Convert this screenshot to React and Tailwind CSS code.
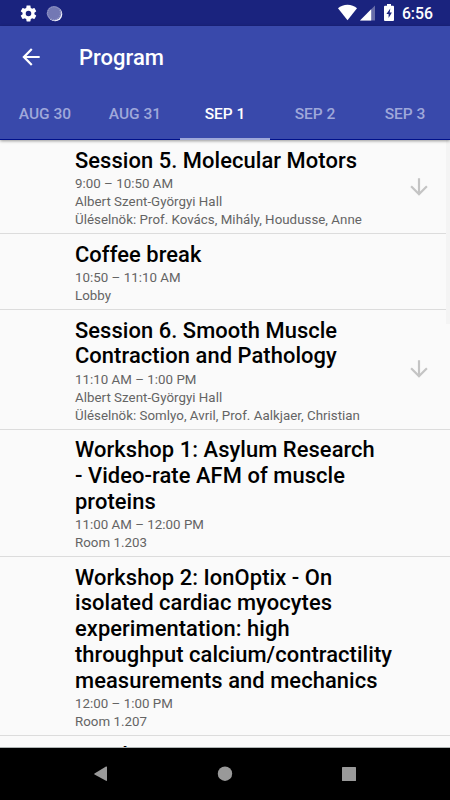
import React from "react";

const tabs = ["AUG 30", "AUG 31", "SEP 1", "SEP 2", "SEP 3"];

const sessions = [
  {
    title: ["Session 5. Molecular Motors"],
    details: ["9:00 – 10:50 AM", "Albert Szent-Györgyi Hall", "Üléselnök: Prof. Kovács, Mihály, Houdusse, Anne"],
    expandable: true,
    height: "h-[94px]",
  },
  { title: ["Coffee break"], details: ["10:50 – 11:10 AM", "Lobby"], height: "h-[76px]" },
  {
    title: ["Session 6. Smooth Muscle", "Contraction and Pathology"],
    details: ["11:10 AM – 1:00 PM", "Albert Szent-Györgyi Hall", "Üléselnök: Somlyo, Avril, Prof. Aalkjaer, Christian"],
    expandable: true,
    height: "h-[119.5px]",
  },
  {
    title: ["Workshop 1: Asylum Research", "- Video-rate AFM of muscle", "proteins"],
    details: ["11:00 AM – 12:00 PM", "Room 1.203"],
    height: "h-[127.5px]",
  },
  {
    title: [
      "Workshop 2: IonOptix - On",
      "isolated cardiac myocytes",
      "experimentation: high",
      "throughput calcium/contractility",
      "measurements and mechanics",
    ],
    details: ["12:00 – 1:00 PM", "Room 1.207"],
    height: "h-[178.5px]",
  },
  { title: ["Lunch"], details: [], height: "h-[76px]" },
];

function StatusBar() {
  return (
    <div className="flex h-[26px] shrink-0 items-center bg-[#1a237e] pl-[19px] pr-[17px] text-white">
      <svg className="size-[19px]" viewBox="0 0 24 24" fill="currentColor">
        <path d="M19.43 12.98c.04-.32.07-.64.07-.98s-.03-.66-.07-.98l2.11-1.65c.19-.15.24-.42.12-.64l-2-3.46c-.12-.22-.39-.3-.61-.22l-2.49 1c-.52-.4-1.08-.73-1.69-.98l-.38-2.65C14.46 2.18 14.25 2 14 2h-4c-.25 0-.46.18-.49.42l-.38 2.65c-.61.25-1.17.59-1.69.98l-2.49-1c-.23-.09-.49 0-.61.22l-2 3.46c-.13.22-.07.49.12.64l2.11 1.65c-.04.32-.07.65-.07.98s.03.66.07.98l-2.11 1.65c-.19.15-.24.42-.12.64l2 3.46c.12.22.39.3.61.22l2.49-1c.52.4 1.08.73 1.69.98l.38 2.65c.03.24.24.42.49.42h4c.25 0 .46-.18.49-.42l.38-2.65c.61-.25 1.17-.59 1.69-.98l2.49 1c.23.09.49 0 .61-.22l2-3.46c.12-.22.07-.49-.12-.64l-2.11-1.65zM12 15.5A3.5 3.5 0 1 1 12 8.5a3.5 3.5 0 0 1 0 7z" />
      </svg>
      <svg className="ml-2 size-[17px]" viewBox="0 0 17 17">
        <circle cx="9.1" cy="9.1" r="7.2" fill="#f2f3fb" />
        <circle cx="8" cy="8.2" r="7.3" fill="#7378b4" />
        <circle cx="8" cy="8.2" r="6.4" fill="none" stroke="#a3a6d0" strokeWidth="1" strokeDasharray="1 1" />
      </svg>
      <div className="ml-auto flex items-center">
        <svg className="h-[17px] w-[19px]" viewBox="0 0 19 17" fill="currentColor">
          <path d="M9.5 16.3 0 4.3C2.5 2 5.8.8 9.5.8S16.500 2 19 4.300Z" />
        </svg>
        <svg className="ml-[2.5px] h-[16px] w-[15px]" viewBox="0 0 15 16">
          <path d="M0 15.500 15 .5v15Z" fill="#686da9" />
          <path d="M0 15.500 11.200 4.300v11.200Z" fill="white" />
        </svg>
        <svg className="ml-[9px] h-[17px] w-[10px]" viewBox="0 0 10 17">
          <path d="M3 0h4v1.700h2a1 1 0 0 1 1 1V16a1 1 0 0 1-1 1H1a1 1 0 0 1-1-1V2.700a1 1 0 0 1 1-1h2Z" fill="white" />
          <path d="M6.300 4.500 2.400 10h2.200v4l3.300-5.500H5.700Z" fill="#1a237e" />
        </svg>
        <span className="ml-[8px] pt-[2px] text-[15.8px] leading-none font-medium">6:56</span>
      </div>
    </div>
  );
}

function AppBar() {
  return (
    <header className="relative z-10 flex h-[114px] shrink-0 flex-col border-b border-[#00108a] bg-[#3949ab] shadow-[0_1px_3px_rgba(0,0,0,0.4)]">
      <div className="flex h-[63px] items-center pl-[18px] text-white">
        <svg className="-mt-[2px] size-[26px]" viewBox="0 0 24 24" fill="currentColor">
          <path d="M20 11H7.830l5.590-5.590L12 4l-8 8 8 8 1.410-1.410L7.830 13H20v-2z" />
        </svg>
        <h1 className="ml-[35px] pt-[1px] text-[22px] leading-none font-medium">Program</h1>
      </div>
      <nav className="grid flex-1 grid-cols-5">
        {tabs.map((tab) => (
          <button
            key={tab}
            className={
              tab === "SEP 1"
                ? "-mb-px border-b-2 border-[#9fa8da] pt-[3px] text-[15.5px] font-medium text-white"
                : "-mb-px border-b-2 border-transparent pt-[3px] text-[15.5px] font-medium text-[#9fa8da]"
            }
          >
            {tab}
          </button>
        ))}
      </nav>
    </header>
  );
}

function Session({ session }) {
  return (
    <article className={`flex shrink-0 items-center border-b border-[#dcdcdc] pl-[75px] ${session.height}`}>
      <div className="flex-1 self-stretch pt-[7.5px]">
        <h2 className="text-[21.9px] leading-[25.75px] font-medium tracking-[0.07px] whitespace-nowrap text-black">
          {session.title.map((line) => (
            <span key={line} className="block">{line}</span>
          ))}
        </h2>
        <div className="pt-[2px] text-[13.3px] leading-[18px] tracking-[0.03px] whitespace-nowrap text-[#646464]">
          {session.details.map((line) => (
            <p key={line}>{line}</p>
          ))}
        </div>
      </div>
      {session.expandable && (
        <svg className="mr-[18px] size-[26px] shrink-0" viewBox="0 0 24 24" fill="#c4c4c4">
          <path d="M20 12l-1.410-1.410L13 16.170V4h-2v12.170l-5.580-5.590L4 12l8 8 8-8z" />
        </svg>
      )}
    </article>
  );
}

function NavigationBar() {
  return (
    <footer className="flex h-[53px] shrink-0 items-center border-t border-[#aeb4b4] bg-black text-[#999999]">
      <svg className="h-[52px] w-full" viewBox="0 0 450 52" fill="currentColor">
        <path d="M94.500 25.600 106 18.500q1-.4 1 .5v13.300q0 .9-1 .500L94.500 26.600q-.8-.5 0-1z" />
        <circle cx="225" cy="25.700" r="7.200" />
        <rect x="342" y="19" width="14" height="14" rx=".5" />
      </svg>
    </footer>
  );
}

export default function App() {
  return (
    <div className="flex h-[800px] w-[450px] flex-col overflow-hidden bg-[#fafafa] font-[Roboto,sans-serif]">
      <StatusBar />
      <AppBar />
      <main className="relative flex min-h-0 flex-1 flex-col overflow-hidden">
        {sessions.map((session) => (
          <Session key={session.title[0]} session={session} />
        ))}
        <div className="absolute top-0 right-0 h-[184px] w-1 bg-[#f4f4f4]" />
      </main>
      <NavigationBar />
    </div>
  );
}
